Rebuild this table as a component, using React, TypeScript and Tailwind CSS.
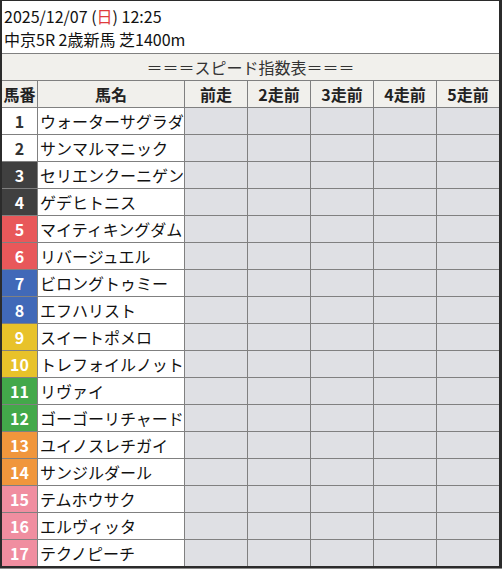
const horses = [
  { no: 1, name: "ウォーターサグラダ", bg: "bg-white", fg: "text-[#333333]" },
  { no: 2, name: "サンマルマニック", bg: "bg-white", fg: "text-[#333333]" },
  { no: 3, name: "セリエンクーニゲン", bg: "bg-[#404040]", fg: "text-white" },
  { no: 4, name: "ゲデヒトニス", bg: "bg-[#404040]", fg: "text-white" },
  { no: 5, name: "マイティキングダム", bg: "bg-[#e8585a]", fg: "text-white" },
  { no: 6, name: "リバージュエル", bg: "bg-[#e8585a]", fg: "text-white" },
  { no: 7, name: "ビロングトゥミー", bg: "bg-[#4169b8]", fg: "text-white" },
  { no: 8, name: "エフハリスト", bg: "bg-[#4169b8]", fg: "text-white" },
  { no: 9, name: "スイートポメロ", bg: "bg-[#e8c22a]", fg: "text-white" },
  { no: 10, name: "トレフォイルノット", bg: "bg-[#e8c22a]", fg: "text-white" },
  { no: 11, name: "リヴァイ", bg: "bg-[#43a84a]", fg: "text-white" },
  { no: 12, name: "ゴーゴーリチャード", bg: "bg-[#43a84a]", fg: "text-white" },
  { no: 13, name: "ユイノスレチガイ", bg: "bg-[#f0963c]", fg: "text-white" },
  { no: 14, name: "サンジルダール", bg: "bg-[#f0963c]", fg: "text-white" },
  { no: 15, name: "テムホウサク", bg: "bg-[#f08ea0]", fg: "text-white" },
  { no: 16, name: "エルヴィッタ", bg: "bg-[#f08ea0]", fg: "text-white" },
  { no: 17, name: "テクノピーチ", bg: "bg-[#f08ea0]", fg: "text-white" },
];

const races = ["前走", "2走前", "3走前", "4走前", "5走前"];

const cols = "grid grid-cols-[35px_146px_62px_62px_62px_62px_62px] gap-px";

export default function App() {
  return (
    <div className="w-[502px] h-[569px] bg-[#8a8a8a] font-['Noto_Sans_CJK_JP','Noto_Sans',sans-serif] text-[16px]">
      <div className="h-[568px] border-l-2 border-t border-r-[3px] border-b-2 border-[#2b2b2b] bg-[#808080] flex flex-col">
        {/* Race info */}
        <div className="h-[52px] bg-white px-[2px] pt-[4px] leading-[23px] text-[#111]">
          <div>
            2025/12/07 (<span className="text-[#e03c3c]">日</span>) 12:25
          </div>
          <div>中京5R 2歳新馬 芝1400m</div>
        </div>

        <div className="mt-px h-[26px] bg-[#f1f0ec] flex items-center justify-center text-[#333]">
          ＝＝＝スピード指数表＝＝＝
        </div>

        {/* Header */}
        <div className={`${cols} mt-px`}>
          <div className="h-[26px] bg-[#f1f0ec] flex items-center justify-center font-bold text-[#222]">馬番</div>
          <div className="h-[26px] bg-[#f1f0ec] flex items-center justify-center font-bold text-[#222]">馬名</div>
          {races.map((r) => (
            <div key={r} className="h-[26px] bg-[#f1f0ec] flex items-center justify-center font-bold text-[#222]">
              {r}
            </div>
          ))}
        </div>

        {/* Rows */}
        <div className={`${cols} mt-px`}>
          {horses.map((h) => (
            <div key={h.no} className="contents">
              <div className={`h-[26px] flex items-center justify-center font-bold ${h.bg} ${h.fg}`}>{h.no}</div>
              <div className="h-[26px] bg-white flex items-center pl-[2px] text-[#111] whitespace-nowrap overflow-hidden">
                {h.name}
              </div>
              {races.map((r) => (
                <div key={r} className="h-[26px] bg-[#dfe0e4]" />
              ))}
            </div>
          ))}
        </div>
      </div>
    </div>
  );
}
